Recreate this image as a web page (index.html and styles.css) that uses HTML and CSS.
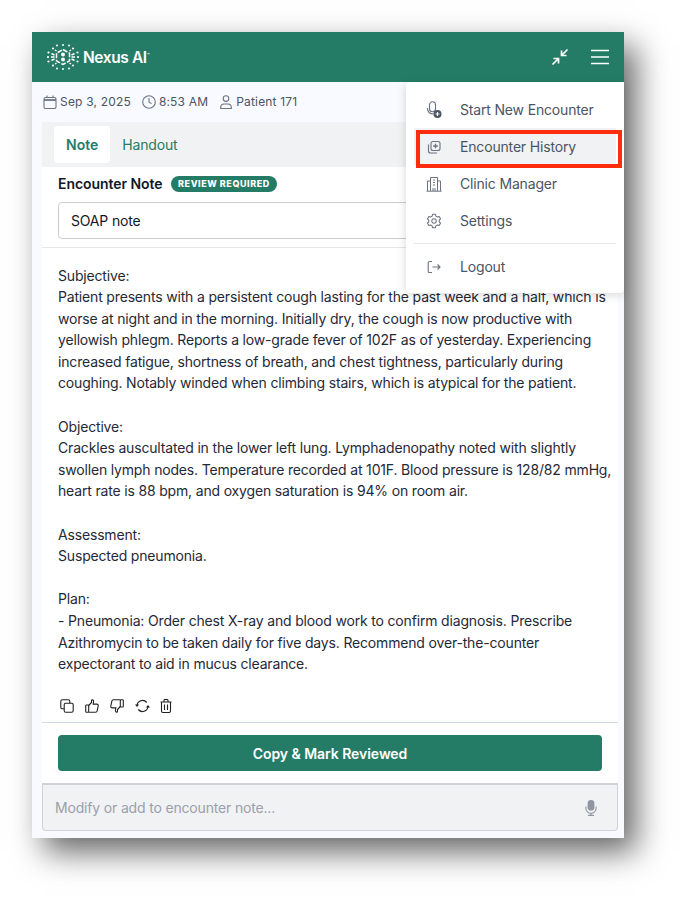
FILE: index.html
```html
<!DOCTYPE html>
<html lang="en">
<head>
    <meta charset="UTF-8">
    <meta name="viewport" content="width=device-width, initial-scale=1.0">
    <title>Nexus AI</title>
    <link rel="stylesheet" href="styles.css">
</head>
<body>
    <div class="window">
        <header class="topbar">
            <div class="brand">
                <svg class="brand-mark" viewBox="0 0 32 26" width="32" height="26" fill="#fff" stroke="none">
                    <path d="M16 5.500l6.500 3.700v7.600L16 20.500l-6.500-3.700V9.200z" fill="none" stroke="#fff" stroke-width="1.500" stroke-dasharray="5 1.500"/>
                    <circle cx="16" cy="10.500" r="2"/><circle cx="16" cy="15.500" r="2"/>
                    <circle cx="16" cy="1" r="1"/><circle cx="16" cy="25" r="1"/>
                    <circle cx="10" cy="1.500" r="1"/><circle cx="22" cy="1.500" r="1"/>
                    <circle cx="10" cy="24.500" r="1"/><circle cx="22" cy="24.500" r="1"/>
                    <circle cx="6" cy="4.500" r="1.100"/><circle cx="26" cy="4.500" r="1.100"/>
                    <circle cx="6" cy="21.500" r="1.100"/><circle cx="26" cy="21.500" r="1.100"/>
                    <circle cx="1.500" cy="8.500" r="1.100"/><circle cx="30.500" cy="8.500" r="1.100"/>
                    <circle cx="1.500" cy="17.500" r="1.100"/><circle cx="30.500" cy="17.500" r="1.100"/>
                    <circle cx="1" cy="13" r="1.100"/><circle cx="31" cy="13" r="1.100"/>
                    <path d="M4 13h3.500M24.500 13H28M4.500 9.500l3 1.700M27.500 9.500l-3 1.700M4.500 16.500l3-1.700M27.500 16.500l-3-1.700M8 6l1.500 1M24 6l-1.500 1M8 20l1.500-1M24 20l-1.500-1" stroke="#fff" stroke-width="1.500" fill="none"/>
                </svg>
                <span class="brand-name">Nexus AI<sup>™</sup></span>
            </div>
            <div class="topbar-actions">
                <svg width="20" height="20" viewBox="0 0 20 20" fill="none" stroke="#fff" stroke-width="1.7">
                    <path d="M17.500 2.500L11.500 8.500M11.500 3.500v5h5M2.500 17.500l6-6M3.500 11.500h5v5"/>
                </svg>
                <svg width="20" height="16" viewBox="0 0 20 16" fill="none" stroke="#fff" stroke-width="1.7">
                    <path d="M1 1.500h18M1 8h18M1 14.500h18"/>
                </svg>
            </div>
        </header>

        <div class="meta">
            <span class="meta-item">
                <svg width="14" height="14" viewBox="0 0 14 14" fill="none" stroke="#6b7280" stroke-width="1.100">
                    <rect x="1" y="2.500" width="12" height="11" rx="1.500"/><path d="M1 5h12" stroke-width="1.800"/><path d="M4 .5v2.500M10 .5v2.500"/>
                </svg>
                Sep 3, 2025
            </span>
            <span class="meta-item">
                <svg width="14" height="14" viewBox="0 0 14 14" fill="none" stroke="#6b7280" stroke-width="1.100">
                    <circle cx="7" cy="7" r="6.300"/><path d="M7 3v4l2.600 1.600"/>
                </svg>
                8:53 AM
            </span>
            <span class="meta-item">
                <svg width="14" height="14" viewBox="0 0 14 14" fill="none" stroke="#6b7280" stroke-width="1.100">
                    <circle cx="7" cy="3.600" r="2.800"/><path d="M1.700 13.500v-1.200c0-2 1.600-3.300 3.400-3.300h3.800c1.800 0 3.400 1.300 3.400 3.300v1.200z"/>
                </svg>
                Patient 171
            </span>
        </div>

        <div class="panel">
            <nav class="tabs">
                <span class="tab tab-active">Note</span>
                <span class="tab">Handout</span>
            </nav>

            <div class="note-head">
                <div class="note-title">
                    <strong>Encounter Note</strong>
                    <span class="badge">REVIEW REQUIRED</span>
                </div>
                <div class="select">SOAP note</div>
            </div>

            <div class="note-body">
                <p>Subjective:<br>Patient presents with a persistent cough lasting for the past week and a half, which is worse at night and in the morning. Initially dry, the cough is now productive with yellowish phlegm. Reports a low-grade fever of 102F as of yesterday. Experiencing increased fatigue, shortness of breath, and chest tightness, particularly during coughing. Notably winded when climbing stairs, which is atypical for the patient.</p>
                <p>Objective:<br>Crackles auscultated in the lower left lung. Lymphadenopathy noted with slightly swollen lymph nodes. Temperature recorded at 101F. Blood pressure is 128/82 mmHg, heart rate is 88 bpm, and oxygen saturation is 94% on room air.</p>
                <p>Assessment:<br>Suspected pneumonia.</p>
                <p>Plan:<br>- Pneumonia: Order chest X-ray and blood work to confirm diagnosis. Prescribe Azithromycin to be taken daily for five days. Recommend over-the-counter expectorant to aid in mucus clearance.</p>
            </div>

            <div class="note-tools">
                <svg width="14" height="14" viewBox="0 0 14 14" fill="none" stroke="#222" stroke-width="1.100">
                    <rect x=".8" y=".8" width="9" height="9" rx="1.500"/><rect x="4.200" y="4.200" width="9" height="9" rx="1.500" fill="#fff"/>
                </svg>
                <svg width="14" height="14" viewBox="0 0 14 14" fill="none" stroke="#222" stroke-width="1.100">
                    <rect x=".7" y="6" width="3" height="7.300" rx=".8"/><path d="M3.700 6.500l2.800-3V1.600c0-1.200 2-1 2.100.6l-.4 2.900h3.600c1 0 1.600.8 1.400 1.700l-1 4.900c-.1.900-.8 1.600-1.700 1.600H3.700"/>
                </svg>
                <svg width="14" height="14" viewBox="0 0 14 14" fill="none" stroke="#222" stroke-width="1.100">
                    <rect x="10.300" y=".7" width="3" height="7.300" rx=".8"/><path d="M10.300 7.500l-2.800 3v1.900c0 1.200-2 1-2.100-.6l.4-2.900H2.200c-1 0-1.600-.8-1.400-1.700l1-4.900C1.900 1.400 2.600.7 3.500.7h6.800"/>
                </svg>
                <svg width="15" height="14" viewBox="0 0 15 14" fill="none" stroke="#222" stroke-width="1.200">
                    <path d="M2 6.500a5.500 5.500 0 0 1 9.700-3M13 7.500a5.500 5.500 0 0 1-9.700 3"/>
                    <path d="M0 5.400h4L2 8zM11 8.600h4l-2-2.600z" fill="#222" stroke="none"/>
                </svg>
                <svg class="tool-trash" width="12" height="14" viewBox="0 0 12 14" fill="none" stroke="#222" stroke-width="1.100">
                    <path d="M.5 3h11M4 3V1.500c0-.6.400-1 1-1h2c.6 0 1 .4 1 1V3M1.500 3v9c0 .9.600 1.500 1.500 1.500h6c.9 0 1.500-.6 1.500-1.500V3M4.500 5.500v5.500M7.500 5.500v5.500"/>
                </svg>
            </div>

            <div class="note-actions">
                <button class="primary-btn">Copy &amp; Mark Reviewed</button>
            </div>
        </div>

        <div class="composer">
            <span class="composer-hint">Modify or add to encounter note...</span>
            <svg width="12" height="16" viewBox="0 0 12 16" fill="#8f96a1">
                <rect x="2.600" y="0" width="6.800" height="10.600" rx="3.400"/>
                <path d="M.9 6.600v1.600a5.100 5.100 0 0 0 10.200 0V6.600" fill="none" stroke="#8f96a1" stroke-width="1.100"/>
                <path d="M6 13v2M3 15.400h6" fill="none" stroke="#8f96a1" stroke-width="1.200"/>
            </svg>
        </div>

        <div class="menu">
            <div class="menu-item">
                <svg width="16" height="18" viewBox="0 0 16 18" fill="none" stroke="#6b7280" stroke-width="1.100">
                    <rect x="3.500" y=".8" width="6" height="10" rx="3"/><path d="M1.500 7c0 4 2.500 6 6 6"/>
                    <circle cx="11.500" cy="13" r="4" fill="#4b5563" stroke="none"/><path d="M9.500 13h4M11.500 11v4" stroke="#fff"/>
                </svg>
                <span>Start New Encounter</span>
            </div>
            <div class="menu-item menu-item-current">
                <svg width="16" height="16" viewBox="0 0 16 16" fill="none" stroke="#6b7280" stroke-width="1.100">
                    <path d="M2.500 5.500v6.500c0 1.200.8 2 2 2h6.500"/><rect x="5" y="2.500" width="9" height="9" rx="2"/><path d="M9.500 4.700v4.600M7.200 7h4.600" stroke-width="1.300"/>
                </svg>
                <span>Encounter History</span>
            </div>
            <div class="menu-item">
                <svg width="16" height="16" viewBox="0 0 16 16" fill="none" stroke="#6b7280" stroke-width="1">
                    <path d="M4.500 15V1.500h7V15M1.500 15V5h3M11.500 5h3v10M.5 15.200h15M7 4h2M7 6.500h2M7 9h2M7 12v3M9 12v3"/>
                </svg>
                <span>Clinic Manager</span>
            </div>
            <div class="menu-item">
                <svg width="16" height="16" viewBox="0 0 18 18" fill="none" stroke="#6b7280" stroke-width="1.200">
                    <path d="M7.400 1.500h3.200l.5 2 1.700 1 2-.6 1.600 2.800-1.500 1.400v1.800l1.500 1.400-1.600 2.800-2-.6-1.700 1-.5 2H7.400l-.5-2-1.700-1-2 .6-1.600-2.800 1.500-1.400V8.100L1.600 6.700l1.600-2.800 2 .6 1.700-1z" stroke-linejoin="round"/><circle cx="9" cy="9" r="2.500"/>
                </svg>
                <span>Settings</span>
            </div>
            <div class="menu-sep"></div>
            <div class="menu-item">
                <svg width="16" height="16" viewBox="0 0 16 16" fill="none" stroke="#6b7280" stroke-width="1.100">
                    <path d="M6 2.500H3.500c-.8 0-1.300.5-1.300 1.300v8.400c0 .8.500 1.300 1.300 1.300H6M6.500 8H14M11.500 5.500L14 8l-2.500 2.500"/>
                </svg>
                <span>Logout</span>
            </div>
            <div class="menu-callout"></div>
        </div>
    </div>
</body>
</html>
```

FILE: styles.css
```css
body {
    font-family: 'Inter', 'Liberation Sans', sans-serif;
    background: #fff;
    color: #111827;
    margin: 0;
    padding: 32px 62px 62px 32px;
}

.window {
    position: relative;
    width: 592px;
    height: 806px;
    background: #f8faff;
    box-shadow: 12px 14px 30px rgba(0, 0, 0, 0.6);
    display: flex;
    flex-direction: column;
}

.topbar {
    height: 50px;
    background: #247c66;
    display: flex;
    align-items: center;
    justify-content: space-between;
    padding: 0 14px 0 15px;
    flex-shrink: 0;
}

.brand {
    display: flex;
    align-items: center;
    gap: 4px;
}

.brand-name {
    color: #fff;
    font-size: 15.5px;
    font-weight: 600;
    letter-spacing: -0.4px;
}

.brand-name sup {
    font-size: 5px;
    font-weight: 400;
    vertical-align: 6px;
    line-height: 0;
}

.topbar-actions {
    display: flex;
    align-items: center;
    gap: 20px;
}

.meta {
    height: 39px;
    padding: 0 11px 1px;
    display: flex;
    align-items: center;
    gap: 11px;
    font-size: 12px;
    letter-spacing: 0.18px;
    color: #4b5563;
    flex-shrink: 0;
}

.meta-item {
    display: flex;
    align-items: center;
    gap: 3px;
}

.panel {
    margin: 0 6px 0 10px;
    background: #fff;
    flex: 1;
    display: flex;
    flex-direction: column;
    min-height: 0;
}

.tabs {
    height: 45px;
    background: #f1f2f4;
    display: flex;
    align-items: flex-start;
    padding: 4px 0 0 12px;
    box-sizing: border-box;
    flex-shrink: 0;
}

.tab {
    height: 37px;
    line-height: 37px;
    padding: 0 12px;
    font-size: 14px;
    letter-spacing: -0.17px;
    color: #247c66;
}

.tab-active {
    background: #fff;
    border-radius: 4px;
    font-weight: 600;
    letter-spacing: 0;
}

.note-head {
    height: 80px;
    padding: 0 16px;
    border-bottom: 1px solid #e5e7eb;
    flex-shrink: 0;
}

.note-title {
    display: flex;
    align-items: center;
    gap: 8px;
    height: 33px;
    padding-bottom: 2px;
    font-size: 14px;
    letter-spacing: -0.05px;
}

.note-title strong {
    font-weight: 600;
}

.badge {
    background: #247c66;
    color: #fff;
    font-size: 9px;
    font-weight: 800;
    letter-spacing: 0.55px;
    padding: 0 7.5px;
    height: 16px;
    line-height: 16px;
    border-radius: 8px;
}

.select {
    height: 35px;
    line-height: 36px;
    border: 1px solid #c9ccd1;
    border-radius: 4px;
    padding: 0 12px;
    font-size: 14px;
    letter-spacing: -0.17px;
    background: #fff;
}

.note-body {
    height: 448px;
    box-sizing: border-box;
    padding: 16.5px 4px 0 16px;
    font-size: 14px;
    line-height: 21.6px;
    letter-spacing: -0.17px;
    color: #1f2937;
    flex-shrink: 0;
}

.note-body p {
    margin: 0 0 21.6px;
}

.note-tools {
    display: flex;
    align-items: center;
    gap: 11px;
    height: 20px;
    padding: 0 18px 0 18px;
}

.tool-trash {
    margin-left: -1px;
}

.note-actions {
    margin-top: 6px;
    border-top: 1px solid #d3dbe8;
    padding: 12px 16px 12px;
}

.primary-btn {
    display: block;
    width: 544px;
    height: 36px;
    background: #247c66;
    color: #fff;
    border: none;
    border-radius: 4px;
    font-family: inherit;
    font-size: 14px;
    font-weight: 600;
    letter-spacing: -0.05px;
}

.composer {
    height: 48px;
    margin: 0 6px 7px 10px;
    box-sizing: border-box;
    background: #f1f2f4;
    border: 1px solid #cfd2d7;
    border-top-width: 2px;
    border-radius: 0 0 4px 4px;
    display: flex;
    align-items: center;
    justify-content: space-between;
    padding: 0 20px 0 12px;
    font-size: 14px;
    letter-spacing: -0.17px;
    color: #9aa0ab;
    flex-shrink: 0;
}

.menu {
    position: absolute;
    top: 50px;
    right: 0;
    width: 218px;
    height: 211px;
    box-sizing: border-box;
    background: #fff;
    border-radius: 4px 0 4px 4px;
    box-shadow: 0 2px 10px rgba(0, 0, 0, 0.16);
    padding: 9px 8px 0;
}

.menu-item {
    height: 37px;
    display: flex;
    align-items: center;
    gap: 18px;
    padding: 0 12px;
    font-size: 14px;
    letter-spacing: -0.17px;
    color: #4b5563;
}

.menu-item-current {
    background: #f1f2f4;
}

.menu-sep {
    height: 1px;
    background: #e5e7eb;
    margin: 4px 0;
}

.menu-callout {
    position: absolute;
    left: 10px;
    top: 48px;
    width: 206px;
    height: 38px;
    box-sizing: border-box;
    border: 4px solid #ff2d0d;
}
```
